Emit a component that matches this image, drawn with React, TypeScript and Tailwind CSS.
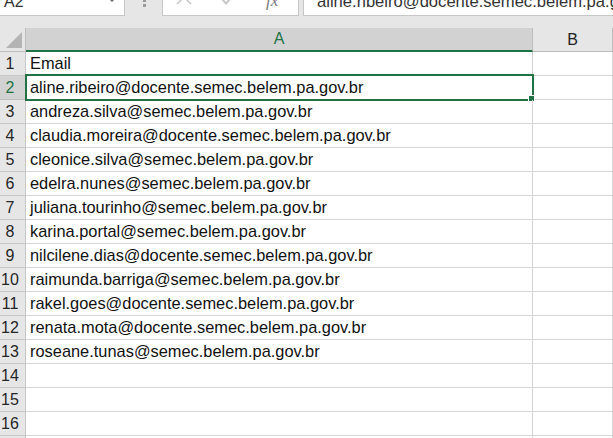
import React from 'react'

const emails = [
  'Email',
  'aline.ribeiro@docente.semec.belem.pa.gov.br',
  'andreza.silva@semec.belem.pa.gov.br',
  'claudia.moreira@docente.semec.belem.pa.gov.br',
  'cleonice.silva@semec.belem.pa.gov.br',
  'edelra.nunes@semec.belem.pa.gov.br',
  'juliana.tourinho@semec.belem.pa.gov.br',
  'karina.portal@semec.belem.pa.gov.br',
  'nilcilene.dias@docente.semec.belem.pa.gov.br',
  'raimunda.barriga@semec.belem.pa.gov.br',
  'rakel.goes@docente.semec.belem.pa.gov.br',
  'renata.mota@docente.semec.belem.pa.gov.br',
  'roseane.tunas@semec.belem.pa.gov.br',
  '',
  '',
  '',
  '',
]

const font = { fontFamily: '"Liberation Sans", Arial, sans-serif' }

function Toolbar() {
  return (
    <div className="flex h-[16px] overflow-hidden bg-[#e6e6e6]">
      {/* name box */}
      <div className="relative -mt-[16px] h-[32px] w-[125px] shrink-0 border-r border-b border-[#c6c6c6] bg-white pt-[10px] pl-[4px] text-[16px] leading-[16px] text-[#333]">
        A2
        <svg className="absolute left-[108px] top-[14px]" width="8" height="5" viewBox="0 0 8 5">
          <polygon points="0,0 8,0 4,4" fill="#666" />
        </svg>
      </div>
      {/* splitter dots */}
      <div className="flex w-[37px] shrink-0 justify-center">
        <div className="-mt-[6px] ml-[1px] flex flex-col gap-[2px]">
          <span className="block h-[3px] w-[3px] bg-[#9a9a9a]" />
          <span className="block h-[3px] w-[3px] bg-[#9a9a9a]" />
          <span className="block h-[3px] w-[3px] bg-[#9a9a9a]" />
        </div>
      </div>
      {/* cancel / enter / fx */}
      <div className="relative -mt-[16px] h-[32px] w-[137px] shrink-0 border border-t-0 border-[#c6c6c6] bg-white">
        <svg className="absolute left-[12px] top-[4px]" width="18" height="18" viewBox="0 0 18 18">
          <path d="M2 2 L16 16 M16 2 L2 16" stroke="#c8c8c8" strokeWidth="1.6" fill="none" />
        </svg>
        <svg className="absolute left-[57px] top-[4px]" width="18" height="18" viewBox="0 0 18 18">
          <path d="M1 10 L6 15.5 L17 3" stroke="#c8c8c8" strokeWidth="2" fill="none" />
        </svg>
        <span
          className="absolute left-[103px] top-[8px] text-[17px] italic leading-[17px] text-[#7a7a7a]"
          style={{ fontFamily: '"Liberation Serif", "Times New Roman", serif' }}
        >
          fx
        </span>
      </div>
      <div className="w-[4px] shrink-0" />
      {/* formula input */}
      <div className="-mt-[16px] h-[32px] flex-1 overflow-hidden whitespace-nowrap border-l border-b border-[#c6c6c6] bg-white pt-[10px] pl-[13px] text-[16.6px] leading-[16px] text-[#333]">
        aline.ribeiro@docente.semec.belem.pa.gov.br
      </div>
    </div>
  )
}

export default function App() {
  return (
    <div className="h-[438px] w-[613px] overflow-hidden bg-[#e6e6e6]" style={font}>
      <Toolbar />
      <div className="h-[12px]" />
      <div className="grid grid-cols-[26px_507px_80px_1fr] bg-white">
        {/* header row */}
        <div className="relative h-[24px] border-r border-b border-[#bdbdbd] bg-[#e6e6e6]">
          <svg className="absolute left-[6px] top-[4px]" width="16" height="16" viewBox="0 0 16 16">
            <polygon points="16,0 16,16 0,16" fill="#b4b4b4" />
          </svg>
        </div>
        <div className="flex h-[24px] items-center justify-center border-r border-b-2 border-r-[#bdbdbd] border-b-[#217346] bg-[#d2d2d2] text-[16px] text-[#217346]">
          A
        </div>
        <div className="flex h-[24px] items-center justify-center border-r border-b border-[#bdbdbd] bg-[#e6e6e6] text-[16px] text-[#222]">
          B
        </div>
        <div className="h-[24px] border-b border-[#bdbdbd] bg-[#e6e6e6]" />

        {emails.map((email, i) => {
          const row = i + 1
          const selected = row === 2
          return (
            <React.Fragment key={row}>
              <div
                className={
                  selected
                    ? 'flex h-[24px] items-center justify-center border-r border-b border-[#bdbdbd] bg-[#d2d2d2] pr-[5px] text-[16px] text-[#217346]'
                    : 'flex h-[24px] items-center justify-center border-r border-b border-[#c6c6c6] bg-[#e6e6e6] pr-[5px] text-[16px] text-[#262626]'
                }
              >
                {row}
              </div>
              <div className="relative flex h-[24px] items-center whitespace-nowrap border-r border-b border-[#d4d4d4] pl-[4px] text-[16.4px] text-[#111]">
                {email}
                {selected && (
                  <div className="absolute -top-[2px] -left-[1px] -right-[2px] -bottom-[2px] border-2 border-[#217346]">
                    <div className="absolute -right-[3px] -bottom-[3px] h-[7px] w-[7px] border border-white bg-[#217346]" />
                  </div>
                )}
              </div>
              <div className="h-[24px] border-r border-b border-[#d4d4d4]" />
              <div className="h-[24px] border-b border-[#d4d4d4]" />
            </React.Fragment>
          )
        })}
      </div>
    </div>
  )
}
